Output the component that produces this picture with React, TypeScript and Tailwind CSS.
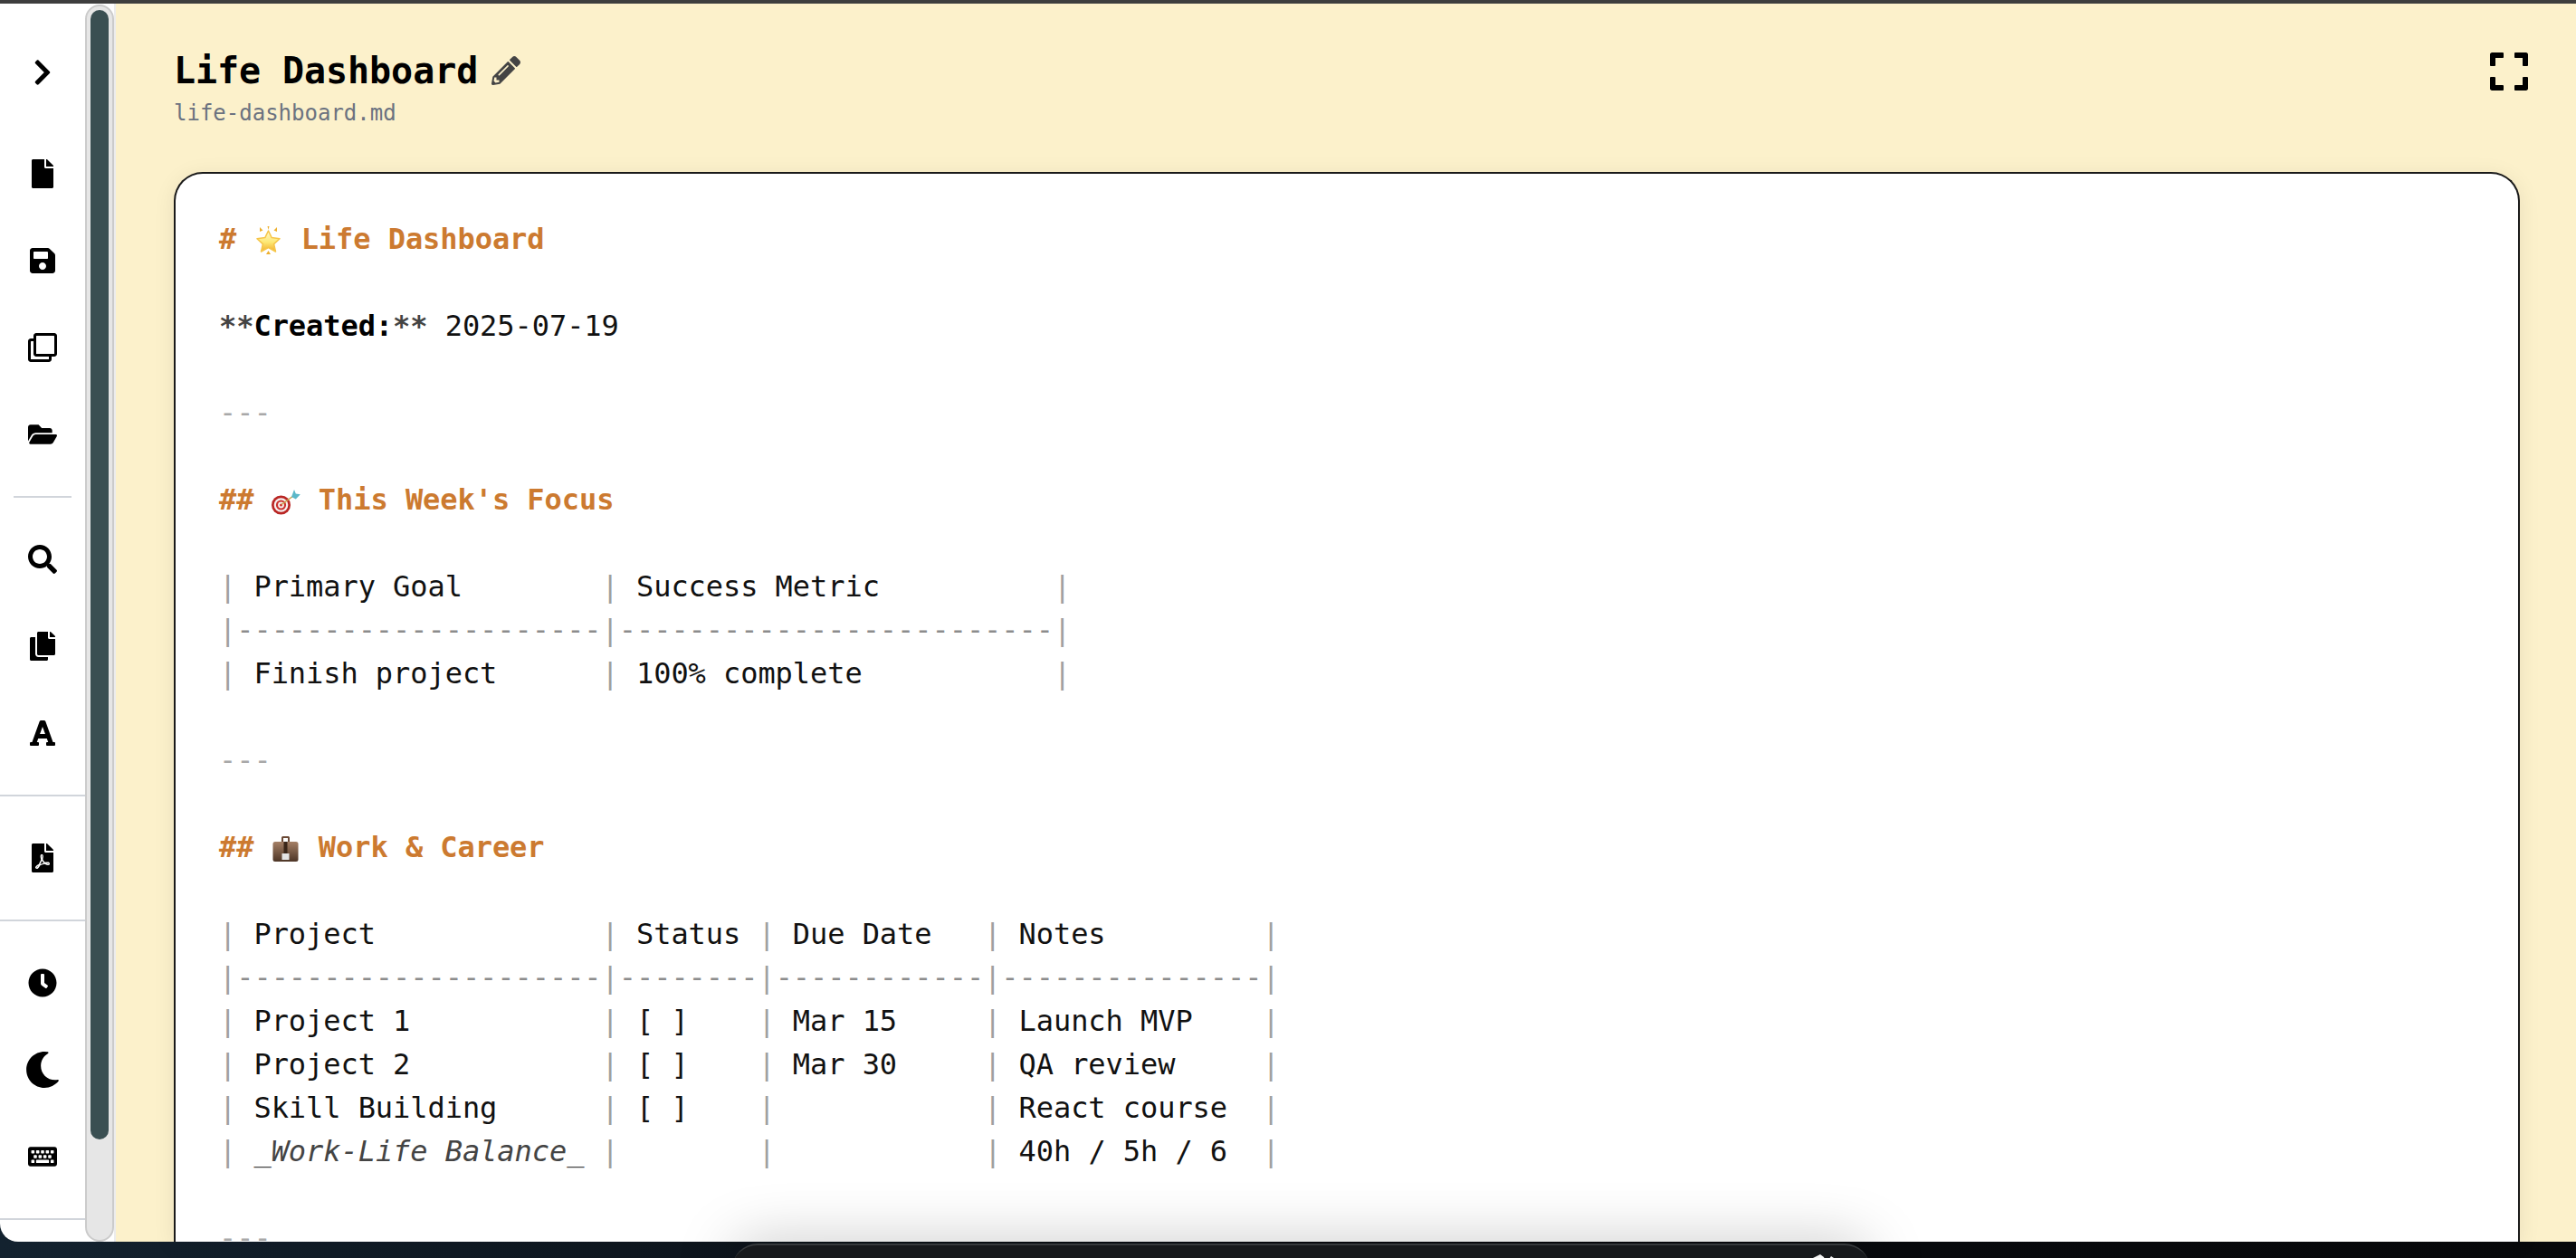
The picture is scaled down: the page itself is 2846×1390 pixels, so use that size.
import type { ReactNode } from "react";
import {
  FaChevronRight,
  FaClock,
  FaCopy,
  FaExpand,
  FaFile,
  FaFilePdf,
  FaFolderOpen,
  FaFont,
  FaKeyboard,
  FaMoon,
  FaPencilAlt,
  FaRegClone,
  FaSave,
  FaSearch,
} from "react-icons/fa";

function NavButton({ children }: { children: ReactNode }) {
  return <button className="flex h-24 w-full items-center justify-center text-black">{children}</button>;
}

function StarEmoji() {
  return (
    <svg viewBox="0 0 33 32" className="inline-block h-8 w-[33px] align-[-7px]">
      <defs>
        <linearGradient id="star" x1="0" y1="0" x2="0" y2="1">
          <stop offset="0" stopColor="#fff8cf" />
          <stop offset="0.55" stopColor="#fde873" />
          <stop offset="1" stopColor="#f2ad2c" />
        </linearGradient>
      </defs>
      <path d="M16.500 5l3.700 7.600 8.800 1.100-6.400 5.900 1.900 8.400-8-4.500-8 4.500 1.900-8.400L4 13.700l8.800-1.100z" fill="url(#star)" stroke="#f6c548" strokeWidth="1.500" strokeLinejoin="round" />
      <path d="M15.500 0h2l-1 4zM7 1l3.500 3.500L7 6zM26 1l-3.500 3.500L26 6zM16.500 27l2.500 4h-5z" fill="#eeb02f" />
    </svg>
  );
}

function TargetEmoji() {
  return (
    <svg viewBox="0 0 33 32" className="inline-block h-8 w-[33px] align-[-7px]">
      <circle cx="10.500" cy="20" r="10.500" fill="#b92624" />
      <circle cx="10.500" cy="20" r="7.800" fill="#f6f0f0" />
      <circle cx="10.500" cy="20" r="5.600" fill="#cb322e" />
      <circle cx="10.500" cy="20" r="3.400" fill="#f8f2f2" />
      <circle cx="10.500" cy="20" r="1.500" fill="#cb322e" />
      <path d="M11 19.500L24 10" stroke="#c9a24a" strokeWidth="1.500" />
      <path d="M22 11l3-8 1.800 4.500 5 .7-5 5.300z" fill="#5cb8c9" />
    </svg>
  );
}

function BriefcaseEmoji() {
  return (
    <svg viewBox="0 0 33 32" className="inline-block h-8 w-[33px] align-[-7px]">
      <defs>
        <linearGradient id="case" x1="0" y1="0" x2="0" y2="1">
          <stop offset="0" stopColor="#a58066" />
          <stop offset="1" stopColor="#4d3526" />
        </linearGradient>
      </defs>
      <path d="M11 8V3.500C11 2.500 12 2 13 2h5c1 0 2 .5 2 1.500V8h-2V4h-5v4z" fill="#6b4a36" />
      <rect x="1.500" y="8" width="28" height="22" rx="2.500" fill="url(#case)" />
      <rect x="13.500" y="8" width="4" height="14" fill="#3a2619" />
      <rect x="11.500" y="21" width="8" height="7" fill="#e4e4e4" />
    </svg>
  );
}

function Heading({ hashes, emoji, title }: { hashes: string; emoji: ReactNode; title: string }) {
  return (
    <div className="h-12 font-bold text-[#cc7a30]">
      {hashes} {emoji} {title}
    </div>
  );
}

function Rule() {
  return <div className="h-12 text-[#a8a8a8]">---</div>;
}

function Blank() {
  return <div className="h-12" />;
}

function TableRow({ text, divider }: { text: string; divider?: boolean }) {
  return (
    <div className="h-12">
      {text.split(/(\|)/).map((part, idx) =>
        part === "|" ? (
          <span key={idx} className="text-[#a0a0a0]">
            |
          </span>
        ) : (
          <span key={idx} className={divider ? "text-[#8c8c8c]" : ""}>
            {part}
          </span>
        ),
      )}
    </div>
  );
}

export default function App() {
  return (
    <div className="relative h-[1390px] w-[2846px] overflow-hidden bg-gradient-to-r from-[#13222f] via-[#0a0c11] to-[#08090b] font-['DejaVu_Sans_Mono','Liberation_Mono',monospace]">
      <div className="flex h-[1372px] flex-col">
        <div className="h-1 shrink-0 bg-[#3e3e3e]" />
        <div className="flex min-h-0 flex-1">
          <aside className="flex w-[126px] shrink-0 overflow-hidden rounded-bl-[20px] bg-white">
            <nav className="w-[94px] shrink-0 pt-7">
              <NavButton>
                <FaChevronRight size={32} />
              </NavButton>
              <div className="h-4" />
              <NavButton>
                <FaFile size={32} />
              </NavButton>
              <NavButton>
                <FaSave size={32} />
              </NavButton>
              <NavButton>
                <FaRegClone size={32} />
              </NavButton>
              <NavButton>
                <FaFolderOpen size={32} />
              </NavButton>
              <div className="mx-[15px] my-5 h-0.5 bg-[#d1d5db]" />
              <NavButton>
                <FaSearch size={32} />
              </NavButton>
              <NavButton>
                <FaCopy size={32} />
              </NavButton>
              <NavButton>
                <FaFont size={32} />
              </NavButton>
              <div className="my-5 h-0.5 bg-[#d1d5db]" />
              <NavButton>
                <FaFilePdf size={32} />
              </NavButton>
              <div className="my-5 h-0.5 bg-[#d1d5db]" />
              <NavButton>
                <FaClock size={32} />
              </NavButton>
              <NavButton>
                <FaMoon size={40} />
              </NavButton>
              <NavButton>
                <FaKeyboard size={32} />
              </NavButton>
              <div className="my-5 h-0.5 bg-[#d1d5db]" />
            </nav>
            <div className="mt-px w-8 shrink-0 rounded-full border-2 border-[#cbcbcb] bg-[#e6e6e6] px-1 pt-1">
              <div className="h-[1248px] rounded-full bg-[#3a4f52]" />
            </div>
          </aside>
          <main className="flex min-w-0 flex-1 flex-col border-l-2 border-[#ececec] bg-[#fcf1cb] pl-16 pr-[62px]">
            <header className="flex h-[186px] shrink-0 items-start justify-between pt-[49px]">
              <div>
                <div className="flex items-center gap-[15px]">
                  <h1 className="text-[40px] font-bold leading-[50px] tracking-[-0.07px] text-black">Life Dashboard</h1>
                  <FaPencilAlt size={32} className="text-[#444]" />
                </div>
                <p className="mt-1.5 text-2xl leading-8 text-[#6b7280]">life-dashboard.md</p>
              </div>
              <button className="-mr-3 mt-0.5 text-black">
                <FaExpand size={48} />
              </button>
            </header>
            <section className="min-h-0 flex-1 overflow-hidden rounded-t-[32px] border-2 border-b-0 border-[#1a1a1a] bg-white p-12 text-[32px] leading-[48px] tracking-[-0.06px] whitespace-pre text-[#111] shadow-[0_4px_24px_rgba(0,0,0,0.08)]">
              <Heading hashes="#" emoji={<StarEmoji />} title="Life Dashboard" />
              <Blank />
              <div className="h-12">
                <span className="font-bold italic text-[#444]">**</span>
                <span className="font-bold text-black">Created:</span>
                <span className="font-bold italic text-[#444]">**</span> 2025-07-19
              </div>
              <Blank />
              <Rule />
              <Blank />
              <Heading hashes="##" emoji={<TargetEmoji />} title="This Week's Focus" />
              <Blank />
              <TableRow text="| Primary Goal        | Success Metric          |" />
              <TableRow text="|---------------------|-------------------------|" divider />
              <TableRow text="| Finish project      | 100% complete           |" />
              <Blank />
              <Rule />
              <Blank />
              <Heading hashes="##" emoji={<BriefcaseEmoji />} title="Work & Career" />
              <Blank />
              <TableRow text="| Project             | Status | Due Date   | Notes         |" />
              <TableRow text="|---------------------|--------|------------|---------------|" divider />
              <TableRow text="| Project 1           | [ ]    | Mar 15     | Launch MVP    |" />
              <TableRow text="| Project 2           | [ ]    | Mar 30     | QA review     |" />
              <TableRow text="| Skill Building      | [ ]    |            | React course  |" />
              <div className="h-12">
                <span className="text-[#a0a0a0]">|</span>{" "}
                <span className="italic text-[#444]">_Work-Life Balance_</span>{" "}
                <span className="text-[#a0a0a0]">|</span>
                {"        "}
                <span className="text-[#a0a0a0]">|</span>
                {"            "}
                <span className="text-[#a0a0a0]">|</span> 40h / 5h / 6{"  "}
                <span className="text-[#a0a0a0]">|</span>
              </div>
              <Blank />
              <Rule />
            </section>
          </main>
        </div>
      </div>
      <div className="absolute left-[809px] top-[1374px] h-10 w-[1257px] overflow-hidden rounded-t-[28px] border-t-2 border-[#36393c] bg-[#17191c] shadow-[0_0_64px_rgba(0,0,0,0.26)]">
        <svg viewBox="0 0 34 8" className="absolute left-[1186px] top-[10px] h-2 w-[34px]">
          <path d="M0 8L10 3l6-3 4 3 2 5zM24 8l4-6 3 2 3 4z" fill="#f5f5f5" />
        </svg>
      </div>
    </div>
  );
}
